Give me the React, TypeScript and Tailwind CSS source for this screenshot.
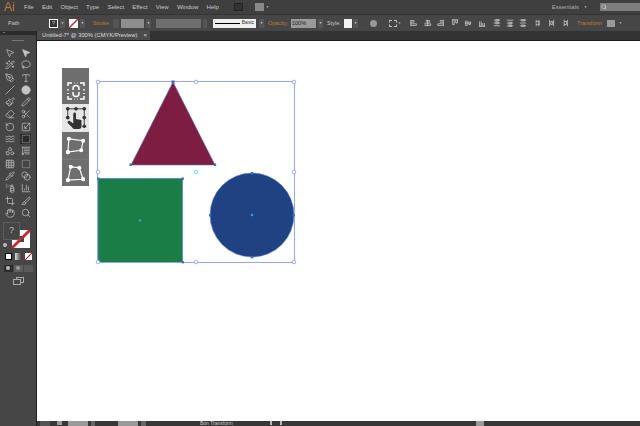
import {
  ChartColumn,
  Blend,
  Circle,
  Crop,
  Eraser,
  Grid3x3,
  Hand,
  Lasso,
  MousePointer2,
  Paintbrush,
  PenTool,
  Pencil,
  Pipette,
  RotateCcw,
  Scaling,
  Scissors,
  Search,
  Shapes,
  Slash,
  Slice,
  SprayCan,
  SquareDashed,
  Type,
  Wand2,
  Waves,
  Blinds,
} from "lucide-react";

const menus = ["File", "Edit", "Object", "Type", "Select", "Effect", "View", "Window", "Help"];

function Caret() {
  return <span className="flex h-[9px] w-[5px] shrink-0 items-center justify-center bg-[#555] text-[3px] text-[#ddd]">▼</span>;
}

function NoFill({ className }: { className: string }) {
  return (
    <svg viewBox="0 0 10 10" className={className}>
      <rect width="10" height="10" fill="#fff" />
      <path d="M0 10 10 0" stroke="#d8222c" strokeWidth="1.6" />
    </svg>
  );
}

// align and distribute buttons in the control bar
const alignPaths = [
  "M1 1v8M1 2h4v2H1M1 6h7v2H1",
  "M4.5 1v8M2 2h5v2H2M0.5 6h8v2H0.5",
  "M8 1v8M8 2H4v2h4M8 6H1v2h7",
  "M1 1h8M2 1v6h2V1M6 1v4h2V1",
  "M1 5h8M2 2v6h2V2M6 3v4h2V3",
  "M1 9h8M2 3v6h2V3M6 5v4h2V5",
  "M1 1.5h8M1 5h8M1 8.5h8M3 0.5h4v2H3M3 4h4v2H3",
  "M1 1.5h8M1 5h8M1 8.5h8M3 4h4v2H3M3 7.5h4v2H3",
  "M1 8.5h8M1 5h8M1 1.5h8M3 7.5h4v2H3M3 0.5h4v2H3",
  "M1.5 1v8M5 1v8M2 3h3v4H2",
  "M2 1v8M7 1v8M3.5 3h2v4h-2z",
  "M8 1v8M4 1v8M4 3h3v4H4",
];

function AlignIcon({ kind }: { kind: number }) {
  return (
    <svg viewBox="0 0 10 10" className="h-[8px] w-[8px] shrink-0" fill="none" stroke="#c8c8c8" strokeWidth="1">
      <path d={alignPaths[kind]} />
    </svg>
  );
}

const toolRows = [
  [MousePointer2, MousePointer2],
  [Wand2, Lasso],
  [PenTool, Type],
  [Slash, Circle],
  [Paintbrush, Pencil],
  [Eraser, Scissors],
  [RotateCcw, Scaling],
  [Waves, SquareDashed],
  [Shapes, Blinds],
  [Grid3x3, SquareDashed],
  [Pipette, Blend],
  [SprayCan, ChartColumn],
  [Crop, Slice],
  [Hand, Search],
];

export default function App() {
  return (
    <div className="flex h-[426px] w-[640px] flex-col overflow-hidden bg-[#3c3c3c] font-['Liberation_Sans',sans-serif] text-[#c8c8c8]">
      {/* menu bar */}
      <div className="flex h-[14px] shrink-0 items-center bg-[#3f3f3f] pl-[4px] text-[6px]">
        <span className="w-[20px] text-[12px] leading-none text-[#b87a3e]">Ai</span>
        <div className="flex gap-[8.25px]">
          {menus.map((m) => (
            <span key={m}>{m}</span>
          ))}
        </div>
        <span className="ml-[15px] h-[8px] w-[9px] border border-[#222] bg-[#333]" />
        <span className="ml-[12px] h-[8px] w-[9px] bg-[#888]" />
        <span className="ml-[2px] text-[3px]">▼</span>
        <span className="ml-auto text-[6px] text-[#aaa]">Essentials</span>
        <span className="ml-[5px] text-[3px]">▼</span>
        <div className="ml-[13px] flex h-[8px] w-[40px] items-center bg-[#7d7d7d] pl-[1px]">
          <Search size={6} color="#eee" />
        </div>
      </div>

      {/* control bar */}
      <div className="flex h-[17px] shrink-0 items-center border-t border-[#333] bg-[#464646] pl-[8px] text-[5.5px]">
        <span className="w-[41px]">Path</span>
        <span className="flex h-[9px] w-[9px] items-center justify-center border border-white bg-[#333] text-[6px]">?</span>
        <span className="ml-[2px]"><Caret /></span>
        <NoFill className="ml-[4px] h-[9px] w-[9px]" />
        <span className="ml-[2px]"><Caret /></span>
        <span className="ml-[8px] w-[20px] text-[#c07a34]">Stroke:</span>
        <span className="h-[9px] w-[6px] bg-[#555]" />
        <span className="ml-[2px] h-[9px] w-[23px] bg-[#8e8e8e]" />
        <span className="ml-[2px]"><Caret /></span>
        <span className="ml-[5px] h-[9px] w-[45px] bg-[#6f6f6f]" />
        <span className="ml-[2px] h-[9px] w-[4px] bg-[#555]" />
        <div className="ml-[6px] flex h-[9px] w-[43px] items-center bg-[#f0f0f0] px-[2px] text-[5px] text-[#333]">
          <span className="h-[1px] w-[26px] bg-black" />
          <span className="ml-[2px]">Basic</span>
        </div>
        <span className="ml-[3px]"><Caret /></span>
        <span className="ml-[4px] w-[23px] text-[#c07a34]">Opacity:</span>
        <span className="flex h-[9px] w-[25px] items-center bg-[#9a9a9a] pl-[1px] text-[#222]">100%</span>
        <span className="ml-[2px]"><Caret /></span>
        <span className="ml-[4px] w-[17px]">Style:</span>
        <span className="h-[9px] w-[8px] bg-[#f2f2f2]" />
        <span className="ml-[1px]"><Caret /></span>
        <span className="ml-[12px] h-[7px] w-[7px] rounded-full bg-[#999]" />
        <span className="ml-[12px] h-[7px] w-[8px] border border-dashed border-[#bbb]" />
        <span className="ml-[1px] w-[12px] text-[3px]">▼</span>
        <div className="flex w-[83px] gap-[5.6px]">
          {[0, 1, 2, 3, 4, 5].map((k) => (
            <AlignIcon key={k} kind={k} />
          ))}
        </div>
        <div className="flex w-[42px] gap-[5px]">
          {[6, 7, 8].map((k) => (
            <AlignIcon key={k} kind={k} />
          ))}
        </div>
        <div className="flex w-[42px] gap-[5px]">
          {[9, 10, 11].map((k) => (
            <AlignIcon key={k} kind={k} />
          ))}
        </div>
        <span className="w-[30px] text-[#c07a34]">Transform</span>
        <span className="h-[7px] w-[8px] bg-[#999]" />
        <span className="ml-[4px] text-[3px]">▼</span>
      </div>

      <div className="flex min-h-0 flex-1">
        {/* tool panel */}
        <div className="flex w-[37px] shrink-0 flex-col items-center border-r border-[#222] bg-[#464646]">
          <div className="flex h-[4px] w-full items-center bg-[#2c2c2c] pl-[3px] text-[3px]">••</div>
          <div className="mt-[5px] h-[1px] w-[12px] bg-[#777]" />
          <div className="mt-[7px] grid grid-cols-2 gap-x-[4.5px] gap-y-[2.3px]">
            {toolRows.flat().map((Icon, i) => (
              <span key={i} className={i === 15 ? "flex h-[10px] w-[11px] items-center justify-center bg-[#2b2b2b]" : "flex h-[10px] w-[11px] items-center justify-center"}>
                <Icon size={10} color="#c4c4c4" fill={i === 1 || i === 7 ? "#c4c4c4" : "none"} strokeWidth={1.7} />
              </span>
            ))}
          </div>
          {/* fill and stroke */}
          <div className="relative mt-[4px] h-[26px] w-full">
            <NoFill className="absolute top-[8px] left-[12px] h-[18px] w-[18px]" />
            <span className="absolute top-[14px] left-[18px] h-[6px] w-[6px] bg-[#464646]" />
            <span className="absolute top-0 left-[3px] flex h-[18px] w-[17px] items-center justify-center border border-[#5e5e5e] bg-[#464646] text-[9px] text-[#bbb]">?</span>
            <svg viewBox="0 0 18 18" className="absolute top-[8px] left-[12px] h-[18px] w-[18px]">
              <path d="M0 18 18 0" stroke="#d8222c" strokeWidth="1.6" />
            </svg>
            <span className="absolute top-[21px] left-[3px] h-[4px] w-[4px] rounded-full bg-[#bbb]" />
          </div>
          <div className="mt-[5px] flex gap-[3px]">
            <span className="h-[7px] w-[7px] border border-black bg-white" />
            <span className="h-[7px] w-[7px] bg-gradient-to-r from-[#ddd] to-[#333]" />
            <NoFill className="h-[7px] w-[7px]" />
          </div>
          <div className="mt-[5px] flex gap-[1px]">
            <span className="flex h-[7px] w-[9px] items-center justify-center bg-[#2e2e2e]"><span className="h-[4px] w-[4px] rounded-full bg-[#bbb]" /></span>
            <span className="flex h-[7px] w-[9px] items-center justify-center bg-[#5e5e5e]"><span className="h-[4px] w-[4px] rounded-full bg-[#999]" /></span>
            <span className="h-[7px] w-[9px] bg-[#5a5a5a]" />
          </div>
          <svg viewBox="0 0 11 8" className="mt-[5px] h-[8px] w-[11px]" fill="#464646" stroke="#aaa" strokeWidth="1">
            <rect x="3.5" y="0.5" width="7" height="5" />
            <rect x="0.5" y="2.5" width="7" height="5" />
          </svg>
        </div>

        <div className="flex min-w-0 flex-1 flex-col">
          {/* tab row */}
          <div className="flex h-[10px] shrink-0 border-b border-[#1e1e1e] bg-[#333]">
            <div className="flex w-[113px] items-center justify-between bg-[#4c4c4c] pr-[3px] pl-[5px] text-[5.8px] text-[#ddd]">
              <span>Untitled-7* @ 300% (CMYK/Preview)</span>
              <span>×</span>
            </div>
          </div>
          <div className="relative min-h-0 flex-1 bg-white">
            {/* floating panel */}
            <div className="absolute top-[27px] left-[25px] flex w-[27px] flex-col">
              <div className="flex h-[36px] items-center justify-center bg-[#6e6e6e] pt-[9px]">
                <svg viewBox="0 0 18 18" className="h-[18px] w-[18px]" fill="none" stroke="#fff" strokeWidth="1.5">
                  <path d="M1 4V1h4M13 1h4v3M1 14v3h4M13 17h4v-3M1 7v1.5M17 7v1.5M1 11v1M17 11v1M7 1h.5M10.5 1h.5M7 17h.5M10.5 17h.5" />
                  <path d="M6 8V6.5a3 3 0 0 1 6 0V8M6 10v1.5a3 3 0 0 0 6 0V10" />
                </svg>
              </div>
              <div className="flex h-[28px] items-center justify-center bg-[#e6e6e6]">
                <svg viewBox="0 0 24 26" className="h-[24px] w-[22px]">
                  <path d="M3 3h18v19M3 3v11" fill="none" stroke="#333" strokeWidth="1" />
                  <g fill="#333">
                    <circle cx="3" cy="3" r="2" /><circle cx="12" cy="3" r="2" /><circle cx="21" cy="3" r="2" />
                    <circle cx="21" cy="12.5" r="2" /><circle cx="3" cy="12.5" r="2" /><circle cx="21" cy="22" r="2" />
                    <path d="M9 8.5a1.5 1.5 0 0 1 3 0V14l6 1.2V22q0 3-3 3H9.500L3 18.500q-.8-1.500.6-2.200 1.300-.6 2.400.4L9 19z" />
                  </g>
                </svg>
              </div>
              <div className="flex h-[27px] items-center justify-center bg-[#6e6e6e]">
                <svg viewBox="0 0 20 20" className="h-[19px] w-[19px]" fill="none" stroke="#fff" strokeWidth="1.2">
                  <path d="M3 3 18 5 16 15 2 17z" />
                  <g fill="#fff"><circle cx="3" cy="3" r="1.6" /><circle cx="18" cy="5" r="1.6" /><circle cx="16" cy="15" r="1.6" /><circle cx="2" cy="17" r="1.6" /></g>
                </svg>
              </div>
              <div className="flex h-[27px] items-center justify-center border-t border-[#777] bg-[#6e6e6e]">
                <svg viewBox="0 0 20 20" className="h-[19px] w-[19px]" fill="none" stroke="#fff" strokeWidth="1.2">
                  <path d="M5 3 14 4 18 16 2 17z" />
                  <g fill="#fff"><circle cx="5" cy="3" r="1.6" /><circle cx="14" cy="4" r="1.6" /><circle cx="18" cy="16" r="1.6" /><circle cx="2" cy="17" r="1.6" /></g>
                </svg>
              </div>
            </div>

            {/* artwork, origin at canvas x=37 y=41 */}
            <svg className="absolute top-0 left-0 h-[380px] w-[603px]" viewBox="37 41 603 380">
              <path d="M173 82 215 165H131z" fill="#7d1d42" stroke="#5b6ec0" strokeWidth="0.6" />
              <rect x="98" y="178.500" width="84.500" height="84" fill="#1a7d45" stroke="#5b82d8" strokeWidth="0.8" />
              <circle cx="252" cy="215" r="42" fill="#1f4283" stroke="#5b82d8" strokeWidth="0.6" />
              <rect x="97.500" y="81.500" width="197" height="181" fill="none" stroke="#8ea8f0" strokeWidth="1" />
              <g fill="#fff" stroke="#8ea8f0" strokeWidth="0.9">
                <circle cx="98" cy="82" r="1.800" /><circle cx="196" cy="82" r="1.800" /><circle cx="294" cy="82" r="1.800" />
                <circle cx="98" cy="172" r="1.800" /><circle cx="294" cy="172" r="1.800" />
                <circle cx="98" cy="262" r="1.800" /><circle cx="196" cy="262" r="1.800" /><circle cx="294" cy="262" r="1.800" />
              </g>
              <path d="M196 169.800 198.200 172 196 174.200 193.800 172z" fill="#d8fbf5" stroke="#64e0d0" strokeWidth="0.9" />
              <g fill="#3f68c8">
                <rect x="171.500" y="80.500" width="3" height="3" />
                <rect x="129.500" y="163.500" width="2.400" height="2.400" /><rect x="213.800" y="163.500" width="2.400" height="2.400" />
                <rect x="97" y="177.500" width="2.400" height="2.400" /><rect x="181.500" y="177.500" width="2.400" height="2.400" />
                <rect x="181.500" y="261" width="2.400" height="2.400" />
                <rect x="250.800" y="172" width="2.400" height="2.400" /><rect x="250.800" y="256" width="2.400" height="2.400" />
                <rect x="209" y="214" width="2.400" height="2.400" /><rect x="292.500" y="214" width="2.400" height="2.400" />
              </g>
              <circle cx="140" cy="220.500" r="1.300" fill="#4a90d8" />
              <circle cx="252" cy="215" r="1.300" fill="#4a90d8" />
            </svg>
          </div>
          {/* status bar */}
          <div className="flex h-[5px] shrink-0 items-start overflow-hidden bg-[#383838] text-[5px]">
            <span className="ml-[3px] h-[5px] w-[10px] bg-[#555]" />
            <span className="ml-[7px] h-[4px] w-[5px] bg-[#999]" />
            <span className="ml-[6px] h-[5px] w-[20px] bg-[#999]" />
            <span className="ml-[3px] h-[5px] w-[4px] bg-[#666]" />
            <span className="ml-[23px] h-[5px] w-[20px] bg-[#999]" />
            <span className="ml-[3px] h-[5px] w-[5px] bg-[#666]" />
            <span className="ml-[54px] leading-[5px]">Bon Transform</span>
            <span className="ml-[37px] h-[4px] w-[2px] bg-[#bbb]" />
            <span className="ml-[8px] h-[4px] w-[2px] bg-[#bbb]" />
            <span className="ml-[194px] h-[5px] w-[8px] bg-[#999]" />
          </div>
        </div>
      </div>
    </div>
  );
}
